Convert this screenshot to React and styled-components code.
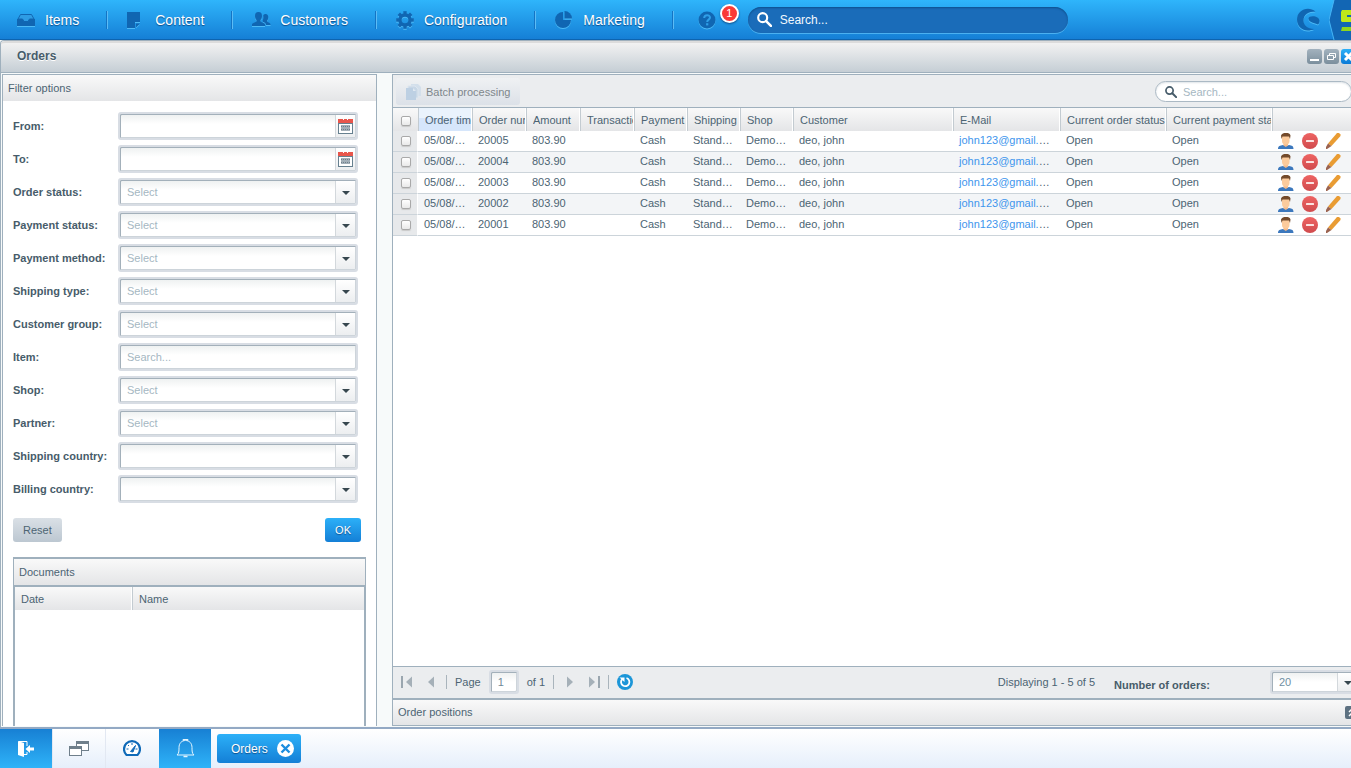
import React from "react";
import styled, { createGlobalStyle, css } from "styled-components";

const GlobalStyle = createGlobalStyle`
  * {
    box-sizing: border-box;
  }
  html, body, #root {
    height: 100%;
    margin: 0;
  }
  body, button, input, select {
    font-family: "Liberation Sans", Arial, sans-serif;
    font-size: 11px;
    color: #4c6473;
  }
  button {
    border: 0;
    padding: 0;
    background: none;
    cursor: pointer;
  }
  svg {
    display: block;
    flex: none;
  }
`;

const navItems = [
  { label: "Items", icon: ItemsIcon },
  { label: "Content", icon: ContentIcon },
  { label: "Customers", icon: CustomersIcon },
  { label: "Configuration", icon: GearIcon },
  { label: "Marketing", icon: PieIcon },
];

const filters = [
  { id: "from", label: "From:", type: "date" },
  { id: "to", label: "To:", type: "date" },
  { id: "orderStatus", label: "Order status:", type: "select", text: "Select" },
  { id: "paymentStatus", label: "Payment status:", type: "select", text: "Select" },
  { id: "paymentMethod", label: "Payment method:", type: "select", text: "Select" },
  { id: "shippingType", label: "Shipping type:", type: "select", text: "Select" },
  { id: "customerGroup", label: "Customer group:", type: "select", text: "Select" },
  { id: "item", label: "Item:", type: "text", text: "Search..." },
  { id: "shop", label: "Shop:", type: "select", text: "Select" },
  { id: "partner", label: "Partner:", type: "select", text: "Select" },
  { id: "shippingCountry", label: "Shipping country:", type: "select", text: "" },
  { id: "billingCountry", label: "Billing country:", type: "select", text: "" },
];

const columns = [
  { key: "time", label: "Order time", width: 54, sorted: true },
  { key: "number", label: "Order number", width: 54 },
  { key: "amount", label: "Amount", width: 54 },
  { key: "transaction", label: "Transaction", width: 54 },
  { key: "payment", label: "Payment", width: 53 },
  { key: "shipping", label: "Shipping", width: 53 },
  { key: "shop", label: "Shop", width: 53 },
  { key: "customer", label: "Customer", width: 160 },
  { key: "email", label: "E-Mail", width: 107 },
  { key: "orderStatus", label: "Current order status", width: 106 },
  { key: "paymentStatus", label: "Current payment status", width: 106 },
];

const orders = ["20005", "20004", "20003", "20002", "20001"].map((number) => ({
  number,
  time: "05/08/2015",
  amount: "803.90",
  transaction: "",
  payment: "Cash",
  shipping: "Standard",
  shop: "Demoshop",
  customer: "deo, john",
  email: "john123@gmail.com",
  orderStatus: "Open",
  paymentStatus: "Open",
}));

function ItemsIcon() {
  return (
    <NavSvg width="18" height="14" viewBox="0 0 18 14">
      <path d="M3.500 1.500h11l2.500 4.500h-4.500l-1.500 2.500H7L5.500 6H1z" fill="#2e9ce4" stroke="#1066b2" />
      <path d="M0 6h5.500L7 8.500h4L12.500 6H18v7H0z" fill="#1066b2" />
    </NavSvg>
  );
}

function ContentIcon() {
  return (
    <NavSvg width="14" height="16" viewBox="0 0 14 16">
      <path d="M0 0h13v10H8v6H0z" fill="#1066b2" />
      <path d="M9 11.500h4L9 15.500z" fill="#1066b2" />
    </NavSvg>
  );
}

function CustomersIcon() {
  return (
    <NavSvg width="19" height="15" viewBox="0 0 19 15">
      <path
        d="M6.500 0C9 0 10 1.500 10 4S9 7.500 8.500 8v1.500c1 1 4.500 1.500 4.500 3V14H0v-1.500c0-1.500 3.500-2 4.500-3V8C4 7.500 3 6.500 3 4s1-4 3.500-4z"
        fill="#1066b2"
      />
      <path
        d="M13.500 2c2 0 2.800 1.300 2.800 3.200S15.500 8 15.200 8.500v1.300c.8.800 3.300 1.200 3.300 2.400V13H14c0-2-2-2.500-3.300-3.200V8.500c.5-1 .8-2.500.5-5 .5-1 1.300-1.500 2.300-1.500z"
        fill="#1066b2"
      />
    </NavSvg>
  );
}

function GearIcon() {
  return (
    <NavSvg width="18" height="18" viewBox="-9 -9 18 18">
      <circle r="5" fill="none" stroke="#1066b2" strokeWidth="3.400" />
      {[0, 45, 90, 135, 180, 225, 270, 315].map((a) => (
        <rect key={a} x="-1.700" y="-8.800" width="3.400" height="3.600" fill="#1066b2" transform={`rotate(${a})`} />
      ))}
    </NavSvg>
  );
}

function PieIcon() {
  return (
    <NavSvg width="18" height="17" viewBox="0 0 18 17">
      <path d="M8 1v8h8a8 8 0 1 1-8-8z" fill="#1066b2" />
      <path d="M9.500 0a7.500 7.500 0 0 1 7.500 7.500H9.500z" fill="#1066b2" />
    </NavSvg>
  );
}

function HelpIcon() {
  return (
    <NavSvg width="18" height="18" viewBox="0 0 18 18">
      <circle cx="9" cy="9" r="8.500" fill="#1066b2" />
      <path d="M6.200 7c0-3.800 5.800-3.600 5.800-.4 0 2-2.800 2.100-2.800 4.400" fill="none" stroke="#2f9fe8" strokeWidth="2" />
      <rect x="8.100" y="12.200" width="2.200" height="2.200" fill="#2f9fe8" />
    </NavSvg>
  );
}

function SearchIcon({ size, color }) {
  return (
    <svg width={size} height={size} viewBox="0 0 14 14">
      <circle cx="5.300" cy="5.300" r="4.200" fill="none" stroke={color} strokeWidth="2" />
      <path d="M8.500 8.500l4.500 4.500" stroke={color} strokeWidth="2.400" strokeLinecap="round" />
    </svg>
  );
}

function SwirlIcon() {
  return (
    <NavSvg width="24" height="24" viewBox="0 0 24 24">
      <path
        d="M19.500 3.500C12-2.500 1 2 1 11.500c0 9 9 13.500 17 9.500-6.500-.5-10.500-3.500-10.500-8.500 0-6 5-9 12-9z"
        fill="#1066b2"
      />
      <path d="M12.500 10.500c0-3.500 11-3.500 11 2.500 0 1.500-.5 2.500-1.500 3.500-3-1.500-9.500-2-9.500-6z" fill="#1066b2" />
    </NavSvg>
  );
}

function BrandMark() {
  return (
    <svg width="34" height="40" viewBox="0 0 34 40">
      <path d="M5 0h29v40H5L0 20z" fill="#1266b4" />
      <path d="M5 0L0 20l5 20" fill="none" stroke="#45b4f5" />
      <path d="M13 10h19v5H18v2h14v5H13l-1-1V12z" fill="#bfe81a" />
      <path d="M13 27h19v4H12z" fill="#8fd61c" />
    </svg>
  );
}

function CalendarIcon() {
  return (
    <svg width="15" height="15" viewBox="0 0 15 15">
      <path d="M0 0h5v1h1V0h3v1h1V0h5v4H0z" fill="#e8564c" />
      <rect x="0.500" y="4.500" width="14" height="10" fill="#fff" stroke="#66808f" />
      <rect x="3" y="6" width="9" height="6" fill="#a3afb8" />
      <path d="M3 7.500h9M3 10.500h9" stroke="#6f808c" strokeDasharray="1 1" />
    </svg>
  );
}

function ArrowIcon() {
  return (
    <svg width="8" height="4" viewBox="0 0 8 4">
      <path d="M0 0h8L4 4z" fill="#37474f" />
    </svg>
  );
}

function PagesIcon() {
  return (
    <svg width="15" height="16" viewBox="0 0 15 16">
      <path d="M5 0h7l3 3v9H5z" fill="#d3dfeb" />
      <path d="M2 2h7l3 3v9H2z" fill="#c8d7e6" stroke="#dde6ef" />
      <path d="M0 4h7l3 3v9H0z" fill="#bdd0e3" />
      <path d="M7 4v3h3z" fill="#dfe8f1" />
    </svg>
  );
}

function UserIcon() {
  return (
    <svg width="16" height="16" viewBox="0 0 16 16">
      <path d="M0 16c0-3 2-3.500 5-4l3 1 3-1c3 .5 4.500 1 4.500 4z" fill="#3c78bd" />
      <path d="M5.500 10h4.500v2.500L7.800 14l-2.300-1.500z" fill="#f3b888" />
      <path d="M4 3h7.500v5c0 2.500-1.500 3.800-3.700 3.800S4 10.500 4 8z" fill="#fccb9c" />
      <path d="M3.500 6L3 2.500C4 .5 5.500 0 8 0s4 .5 4.500 2.500L12 6l-1-2.500H4.500z" fill="#734a2b" />
    </svg>
  );
}

function RemoveIcon() {
  return (
    <svg width="16" height="16" viewBox="0 0 16 16">
      <defs>
        <linearGradient id="removeFill" x2="0" y2="1">
          <stop offset="0" stopColor="#ee6463" />
          <stop offset="1" stopColor="#d04a4d" />
        </linearGradient>
      </defs>
      <circle cx="8" cy="8" r="8" fill="url(#removeFill)" />
      <rect x="4" y="7" width="8" height="2" rx="0.500" fill="#fbe3e1" />
    </svg>
  );
}

function PencilIcon() {
  return (
    <svg width="15" height="16" viewBox="0 0 15 16">
      <path d="M11 0h2l1.500 1.500V3l-9 10L2 10.500z" fill="#e99c33" />
      <path d="M2 10.500L5.500 13 1 16H0v-2z" fill="#9b6350" />
    </svg>
  );
}

function PageArrow({ flip, bar }) {
  return (
    <svg width={bar ? 12 : 8} height="13" viewBox={bar ? "0 0 12 13" : "0 0 8 13"}>
      <g transform={flip ? `translate(${bar ? 12 : 8} 0) scale(-1 1)` : undefined}>
        {bar && <rect width="2" height="12" fill="#9aa6af" />}
        <path d={bar ? "M11 0.500v11L5 6z" : "M7 0.500v11L1 6z"} fill="#a5b0b8" />
      </g>
    </svg>
  );
}

function RefreshIcon() {
  return (
    <svg width="16" height="16" viewBox="0 0 16 16">
      <circle cx="8" cy="8" r="8" fill="#1c96d8" />
      <path d="M5 5.300A4.200 4.200 0 1 0 9.500 4" fill="none" stroke="#fff" strokeWidth="1.800" />
      <path d="M2.500 3.500h5v4.500z" fill="#fff" />
    </svg>
  );
}

function ExitIcon() {
  return (
    <svg width="16" height="18" viewBox="0 0 16 18">
      <path d="M0 1l6 2v14l-6-2z" fill="#fff" />
      <path d="M1 1.500h8V6M9 12v2.500H6" fill="none" stroke="#fff" />
      <path d="M7.500 9L12 5v2.500h4v3h-4V13z" fill="#fff" />
    </svg>
  );
}

function WindowsIcon() {
  return (
    <svg width="20" height="16" viewBox="0 0 20 16" fill="#fff" stroke="#6f7f8b">
      <rect x="7.500" y="0.500" width="12" height="9" />
      <path d="M7 1.500h13" strokeWidth="3" />
      <rect x="0.500" y="5.500" width="12" height="9" />
      <path d="M0 6.500h13" strokeWidth="3" />
    </svg>
  );
}

function GaugeIcon() {
  return (
    <svg width="18" height="17" viewBox="0 0 18 17">
      <path d="M3.500 15A8 8 0 1 1 14.500 15z" fill="#fff" stroke="#0f6ab8" strokeWidth="2.200" strokeLinejoin="round" />
      <path d="M9 3v2M3.500 9h2M14.500 9h-2M5 5l1 1" stroke="#0f6ab8" />
      <path d="M7.500 11.500L12.500 5.500 10 12z" fill="#0f6ab8" stroke="#0f6ab8" />
    </svg>
  );
}

function BellIcon() {
  return (
    <svg width="19" height="19" viewBox="0 0 19 19" fill="none" stroke="#e4f5ff">
      <path d="M1 16c2-1.500 2-4 2-7.500 0-4 2.500-7 6.500-7s6.500 3 6.500 7c0 3.500 0 6 2 7.500z" />
      <path d="M7 1.500C8-.2 11-.2 12 1.500M7.500 17.500h4" strokeWidth="1.600" />
    </svg>
  );
}

function CloseCircle() {
  return (
    <svg width="17" height="17" viewBox="0 0 17 17">
      <circle cx="8.500" cy="8.500" r="8.500" fill="#fff" />
      <path d="M4.500 4.500l8 8M12.500 4.500l-8 8" stroke="#1c8ddf" strokeWidth="2.400" />
    </svg>
  );
}

function FilterField({ filter }) {
  const { id, label, type, text } = filter;
  return (
    <FieldRow>
      <FieldLabel htmlFor={id}>{label}</FieldLabel>
      <FieldBox>
        {type === "select" ? (
          <FieldSelect id={id}>
            <option>{text}</option>
          </FieldSelect>
        ) : (
          <FieldInput id={id} type="text" placeholder={text} />
        )}
        {type === "select" && (
          <Trigger>
            <ArrowIcon />
          </Trigger>
        )}
        {type === "date" && (
          <DateButton aria-label={`Pick date ${label}`}>
            <CalendarIcon />
          </DateButton>
        )}
      </FieldBox>
    </FieldRow>
  );
}

function OrdersTable() {
  return (
    <Table>
      <colgroup>
        <Col $width={25} />
        {columns.map(({ key, width }) => (
          <Col key={key} $width={width} />
        ))}
        <col />
      </colgroup>
      <thead>
        <tr>
          <CheckHead>
            <Checkbox aria-label="Select all orders" />
          </CheckHead>
          {columns.map(({ key, label, sorted }) => (
            <HeadCell key={key} $sorted={sorted}>
              <HeadText>{label}</HeadText>
            </HeadCell>
          ))}
          <HeadCell />
        </tr>
      </thead>
      <tbody>
        {orders.map((order) => (
          <Row key={order.number}>
            <CheckCell>
              <Checkbox aria-label={`Select order ${order.number}`} />
            </CheckCell>
            {columns.map(({ key }) => (
              <Cell key={key}>
                {key === "email" ? <a href={`mailto:${order.email}`}>{order.email}</a> : order[key]}
              </Cell>
            ))}
            <ActionCell>
              <Actions>
                <button aria-label="Open customer"><UserIcon /></button>
                <button aria-label="Delete order"><RemoveIcon /></button>
                <button aria-label="Edit order"><PencilIcon /></button>
              </Actions>
            </ActionCell>
          </Row>
        ))}
      </tbody>
    </Table>
  );
}

function App() {
  return (
    <Page>
      <GlobalStyle />
      <Header>
        <Nav>
          {navItems.map(({ label, icon: Icon }) => (
            <NavItem key={label}>
              <NavIcon><Icon /></NavIcon>
              {label}
            </NavItem>
          ))}
        </Nav>
        <HelpButton aria-label="Help">
          <HelpIcon />
          <Badge>1</Badge>
        </HelpButton>
        <GlobalSearch>
          <SearchIcon size={15} color="#fff" />
          <input type="text" placeholder="Search..." aria-label="Search" />
        </GlobalSearch>
        <Brand>
          <SwirlIcon />
          <BrandMark />
        </Brand>
      </Header>

      <Window>
        <TitleBar>
          <h1>Orders</h1>
          <WindowButton aria-label="Minimize">
            <svg width="15" height="15"><path d="M3 11h9" stroke="#fff" strokeWidth="2" /></svg>
          </WindowButton>
          <WindowButton aria-label="Restore">
            <svg width="15" height="15" fill="none" stroke="#fff">
              <path d="M5.500 6.500v-2h6v4h-2M3.500 6.500h6v4h-6z" />
            </svg>
          </WindowButton>
          <WindowButton $close aria-label="Close">
            <svg width="15" height="15"><path d="M4 4l7 7M11 4l-7 7" stroke="#fff" strokeWidth="3" /></svg>
          </WindowButton>
        </TitleBar>

        <Content>
          <FilterPanel>
            <PanelHeader>Filter options</PanelHeader>
            <FilterBody>
              {filters.map((filter) => (
                <FilterField key={filter.id} filter={filter} />
              ))}
              <ButtonRow>
                <Button>Reset</Button>
                <Button $primary>OK</Button>
              </ButtonRow>
              <Documents>
                <DocumentsHeader>Documents</DocumentsHeader>
                <DocumentsBody>
                  <Table>
                    <colgroup>
                      <Col $width={117} />
                      <col />
                    </colgroup>
                    <thead>
                      <tr>
                        <HeadCell>Date</HeadCell>
                        <HeadCell>Name</HeadCell>
                      </tr>
                    </thead>
                  </Table>
                </DocumentsBody>
              </Documents>
            </FilterBody>
          </FilterPanel>

          <OrdersPanel>
            <Toolbar>
              <BatchButton disabled>
                <PagesIcon />
                Batch processing
              </BatchButton>
              <GridSearch>
                <SearchIcon size={12} color="#475c6a" />
                <input type="text" placeholder="Search..." aria-label="Search orders" />
              </GridSearch>
            </Toolbar>
            <GridBody>
              <OrdersTable />
            </GridBody>
            <Pager>
              <PagerGroup>
                <PagerButton $width={24} aria-label="First page"><PageArrow bar /></PagerButton>
                <PagerButton $width={11} aria-label="Previous page"><PageArrow /></PagerButton>
                <PagerLine />
                <label htmlFor="page">Page</label>
                <PageBox>
                  <FieldInput id="page" type="text" defaultValue="1" />
                </PageBox>
                <span>of 1</span>
                <PagerLine />
                <PagerButton $width={12} $end aria-label="Next page"><PageArrow flip /></PagerButton>
                <PagerButton $width={24} $end aria-label="Last page"><PageArrow flip bar /></PagerButton>
                <PagerLine />
                <PagerButton $width={16} aria-label="Refresh"><RefreshIcon /></PagerButton>
              </PagerGroup>
              <span>Displaying 1 - 5 of 5</span>
              <CountLabel htmlFor="count">Number of orders:</CountLabel>
              <CountBox>
                <FieldSelect id="count" $filled>
                  <option>20</option>
                </FieldSelect>
                <Trigger>
                  <ArrowIcon />
                </Trigger>
              </CountBox>
            </Pager>
            <PositionsHeader>
              Order positions
              <ExpandButton aria-label="Expand order positions">
                <svg width="13" height="13" fill="none" stroke="#fff" strokeWidth="1.500">
                  <path d="M4 6l2.500-2.500L9 6M4 10l2.500-2.500L9 10" />
                </svg>
              </ExpandButton>
            </PositionsHeader>
          </OrdersPanel>
        </Content>
      </Window>

      <Taskbar>
        <TaskButton $active aria-label="Log out"><ExitIcon /></TaskButton>
        <TaskButton aria-label="Windows"><WindowsIcon /></TaskButton>
        <TaskButton aria-label="Dashboard"><GaugeIcon /></TaskButton>
        <TaskButton $active aria-label="Notifications"><BellIcon /></TaskButton>
        <TaskTab>
          Orders
          <CloseCircle />
        </TaskTab>
      </Taskbar>
    </Page>
  );
}

const greyGradient = css`
  background: linear-gradient(#f9f9f9, #e4e5e7);
`;

const Page = styled.div`
  display: flex;
  flex-direction: column;
  height: 100vh;
  overflow: hidden;
  background: #f7fafa;
`;

const Header = styled.header`
  display: flex;
  align-items: center;
  flex: none;
  height: 40px;
  margin-right: -12px;
  background: linear-gradient(#2fb5fb, #157fd6);
  border-bottom: 1px solid #0d64b0;
`;

const Nav = styled.nav`
  display: flex;
`;

const NavSvg = styled.svg`
  filter: drop-shadow(0 1px 0 #4dbaf6);
`;

const NavItem = styled.button`
  display: flex;
  align-items: center;
  gap: 9px;
  height: 18px;
  padding: 0 28px 0 19px;
  border-right: 1px solid #5cbcf5;
  box-shadow: inset -1px 0 #1474c4;
  font-size: 14px;
  color: #fff;
  text-shadow: 0 1px 1px #0d4f8c;
  &:first-child {
    padding-left: 17px;
  }
`;

const NavIcon = styled.span`
  display: flex;
  width: 19px;
`;

const HelpButton = styled.button`
  position: relative;
  margin: 0 32px 0 24px;
`;

const Badge = styled.span`
  position: absolute;
  left: 22px;
  top: -7px;
  width: 19px;
  height: 19px;
  border: 2px solid #fff;
  border-radius: 50%;
  background: #f93a37;
  box-shadow: 0 1px 2px #0d4f8c;
  color: #fff;
  font-size: 11px;
  line-height: 15px;
  text-align: center;
`;

const GlobalSearch = styled.div`
  display: flex;
  align-items: center;
  gap: 8px;
  width: 320px;
  height: 26px;
  padding-left: 9px;
  border-radius: 13px;
  background: #1a6cb9;
  box-shadow: inset 0 1px 2px #0d4f8c, 0 1px 0 #4bb0f0;
  input {
    flex: 1;
    min-width: 0;
    padding: 0;
    border: 0;
    background: none;
    font-size: 12px;
    &::placeholder {
      color: #f2f8fd;
    }
  }
`;

const Brand = styled.div`
  display: flex;
  align-items: center;
  gap: 9px;
  margin-left: auto;
`;

/* runs past the right edge like a maximized desktop window */
const Window = styled.main`
  display: flex;
  flex-direction: column;
  flex: 1;
  min-height: 0;
  margin-right: -12px;
  padding-bottom: 1px;
  border: 1px solid #9fb0bd;
  border-bottom: 0;
  border-radius: 4px 4px 0 0;
`;

const TitleBar = styled.div`
  display: flex;
  align-items: center;
  gap: 2px;
  flex: none;
  height: 32px;
  padding: 0 6px 3px 16px;
  border-top: 2px solid #dcdcdc;
  border-bottom: 1px solid #9fb0bd;
  border-radius: 4px 4px 0 0;
  background: linear-gradient(#f2f2f2, #c5ced5);
  h1 {
    flex: 1;
    margin: 0;
    font-size: 12px;
    color: #475c6a;
    text-shadow: 0 1px 0 #fff;
  }
`;

const WindowButton = styled.button`
  width: 15px;
  height: 15px;
  border-radius: 3px;
  background: ${({ $close }) =>
    $close ? "linear-gradient(#2cb0f8, #0a7ad6)" : "linear-gradient(#a3b2be, #7b8f9d)"};
`;

const Content = styled.div`
  display: flex;
  gap: 15px;
  flex: 1;
  min-height: 0;
  padding: 1px 1px 0;
`;

const FilterPanel = styled.section`
  display: flex;
  flex-direction: column;
  flex: none;
  width: 375px;
  border: 1px solid #9fb0bd;
  border-bottom: 0;
  background: #fff;
`;

const PanelHeader = styled.div`
  flex: none;
  height: 26px;
  padding: 0 5px;
  line-height: 26px;
  ${greyGradient}
`;

const FilterBody = styled.div`
  display: flex;
  flex-direction: column;
  gap: 5px;
  flex: 1;
  min-height: 0;
  padding: 11px 10px 0;
`;

const FieldRow = styled.div`
  display: flex;
  align-items: center;
  flex: none;
  height: 28px;
`;

const FieldLabel = styled.label`
  width: 105px;
  font-weight: bold;
  color: #475c6a;
`;

const FieldBox = styled.div`
  display: flex;
  width: 240px;
  height: 28px;
  padding: 1px;
  border: 2px solid #d8dde4;
  border-radius: 3px;
  background: linear-gradient(#edf0f0, #fff 10px);
  box-shadow: inset 1px 1px #a3b0ba, inset -1px -1px #cdd4da;
`;

const field = css`
  flex: 1;
  min-width: 0;
  padding: 0 6px;
  border: 0;
  outline: 0;
  background: none;
`;

const FieldInput = styled.input`
  ${field}
  color: #6f8796;
  &::placeholder {
    color: #a5b7c2;
  }
`;

const FieldSelect = styled.select`
  ${field}
  appearance: none;
  color: ${({ $filled }) => ($filled ? "#6f8fa3" : "#a5b7c2")};
`;

const trigger = css`
  display: flex;
  align-items: center;
  justify-content: center;
  width: 20px;
  border-left: 1px solid #d3d8dc;
  background: linear-gradient(#fff, #eceef0);
`;

const Trigger = styled.span`
  ${trigger}
  padding-top: 2px;
`;

const DateButton = styled.button`
  ${trigger}
`;

const ButtonRow = styled.div`
  display: flex;
  justify-content: space-between;
  flex: none;
  margin: 10px 5px 10px 0;
`;

const Button = styled.button`
  height: 24px;
  padding: 0 10px;
  border-radius: 3px;
  background: linear-gradient(#dae0e6, #bcc7d1);
  ${({ $primary }) =>
    $primary &&
    css`
      background: linear-gradient(#2cb0f8, #147fd6);
      color: #fff;
      text-shadow: 0 1px 1px #0d4f8c;
    `}
`;

const Documents = styled.section`
  display: flex;
  flex-direction: column;
  flex: 1;
  min-height: 0;
`;

const DocumentsHeader = styled.div`
  height: 28px;
  padding: 0 5px;
  border: 1px solid #9fb0bd;
  border-width: 2px 1px 0;
  line-height: 26px;
  ${greyGradient}
`;

const DocumentsBody = styled.div`
  flex: 1;
  border: 2px solid #9fb0bd;
  border-bottom: 0;
`;

const OrdersPanel = styled.section`
  display: flex;
  flex-direction: column;
  flex: 1;
  min-width: 0;
  border: 1px solid #9fb0bd;
  background: #fff;
`;

const Toolbar = styled.div`
  display: flex;
  align-items: center;
  justify-content: space-between;
  flex: none;
  height: 33px;
  padding: 1px 8px 0 3px;
  border-bottom: 1px solid #9fb0bd;
  background: #ebedef;
`;

const BatchButton = styled.button`
  display: flex;
  align-items: center;
  gap: 5px;
  height: 27px;
  padding: 0 10px;
  border-radius: 3px;
  background: linear-gradient(#eff1f3, #dce1e8);
  color: #7e868b;
`;

const GridSearch = styled.div`
  display: flex;
  align-items: center;
  gap: 6px;
  width: 197px;
  height: 21px;
  padding-left: 9px;
  border: 1px solid #abb9c4;
  border-radius: 11px;
  background: #fff;
  box-shadow: inset 0 1px 2px #dfe4e8;
  input {
    ${field}
    padding: 0;
    &::placeholder {
      color: #a5b7c2;
    }
  }
`;

const GridBody = styled.div`
  flex: 1;
  min-height: 0;
  overflow: hidden;
`;

const Table = styled.table`
  width: 100%;
  table-layout: fixed;
  border-collapse: separate;
  border-spacing: 0;
`;

const Col = styled.col`
  width: ${({ $width }) => $width}px;
`;

const HeadCell = styled.th`
  height: 23px;
  padding: 0 0 0 6px;
  border-left: 1px solid #c3cbd1;
  border-right: 1px solid #fff;
  font-weight: normal;
  text-align: left;
  background: ${({ $sorted }) =>
    $sorted ? "linear-gradient(#eaf3fd 45%, #d6e6fb 45%)" : "linear-gradient(#f9f9f9, #e4e5e7)"};
  &:first-child {
    border-left: 0;
  }
  &:last-child {
    border-right: 0;
  }
`;

const HeadText = styled.div`
  padding-top: 1px;
  white-space: nowrap;
  overflow: hidden;
`;

const CheckHead = styled.th`
  padding: 2px 0 0 8px;
  text-align: left;
  ${greyGradient}
`;

const Cell = styled.td`
  height: 21px;
  padding: 0 6px 2px;
  border-bottom: 1px solid #ccd4da;
  white-space: nowrap;
  overflow: hidden;
  text-overflow: ellipsis;
  a {
    color: #3e96ed;
    text-decoration: none;
  }
`;

const ActionCell = styled(Cell)`
  padding: 0 6px;
`;

const CheckCell = styled.td`
  padding: 0 0 0 8px;
  border-right: 1px solid #fff;
  border-bottom: 1px solid #ccd4da;
  background: #e7e9eb;
`;

const Row = styled.tr`
  &:nth-child(even) {
    background: #f3f5f7;
  }
`;

const Checkbox = styled.input.attrs({ type: "checkbox" })`
  display: block;
  appearance: none;
  width: 10px;
  height: 10px;
  margin: 0;
  border: 1px solid #a9a9a9;
  border-radius: 2px;
  background: linear-gradient(#fff, #e9e9e9);
  box-shadow: 0 1px 1px #c9c9c9;
`;

const Actions = styled.div`
  display: flex;
  gap: 8px;
`;

const Pager = styled.div`
  display: flex;
  align-items: center;
  flex: none;
  height: 32px;
  padding-bottom: 1px;
  border-top: 1px solid #9fb0bd;
  background: #ebedef;
`;

const PagerGroup = styled.div`
  display: flex;
  align-items: center;
  gap: 8px;
  flex: 1;
  padding-left: 8px;
`;

const PagerButton = styled.button`
  display: flex;
  justify-content: ${({ $end }) => ($end ? "flex-end" : "flex-start")};
  width: ${({ $width }) => $width}px;
  & + & {
    margin-left: -6px;
  }
`;

const PagerLine = styled.span`
  width: 1px;
  height: 14px;
  background: #a9b4bc;
`;

const PageBox = styled(FieldBox)`
  width: 30px;
  height: 24px;
`;

const CountLabel = styled.label`
  width: 156px;
  padding: 6px 0 0;
  margin-left: 19px;
  font-weight: bold;
  color: #475c6a;
`;

const CountBox = styled(FieldBox)`
  width: 90px;
  height: 24px;
`;

const PositionsHeader = styled.div`
  display: flex;
  align-items: center;
  justify-content: space-between;
  flex: none;
  height: 27px;
  padding: 0 2px 1px 5px;
  border-top: 2px solid #9fb0bd;
  ${greyGradient}
`;

const ExpandButton = styled.button`
  width: 13px;
  height: 13px;
  border-radius: 2px;
  background: #5d7181;
`;

const Taskbar = styled.footer`
  display: flex;
  gap: 1px;
  flex: none;
  height: 41px;
  border-top: 2px solid #93a9c4;
  background: linear-gradient(#fff, #e6effb);
`;

const TaskButton = styled.button`
  display: flex;
  align-items: center;
  justify-content: center;
  width: 52px;
  box-shadow: -1px 0 #e2e8f2;
  ${({ $active }) =>
    $active &&
    css`
      box-shadow: none;
      background: linear-gradient(#1780d4, #2fb3f8);
    `}
`;

const TaskTab = styled.button`
  display: flex;
  align-items: center;
  gap: 9px;
  height: 29px;
  margin: 5px;
  padding: 0 7px 0 14px;
  border-radius: 3px;
  background: linear-gradient(#2cb0f8, #147fd6);
  font-size: 12px;
  color: #fff;
  text-shadow: 0 1px 1px #0d4f8c;
`;

export default App;
